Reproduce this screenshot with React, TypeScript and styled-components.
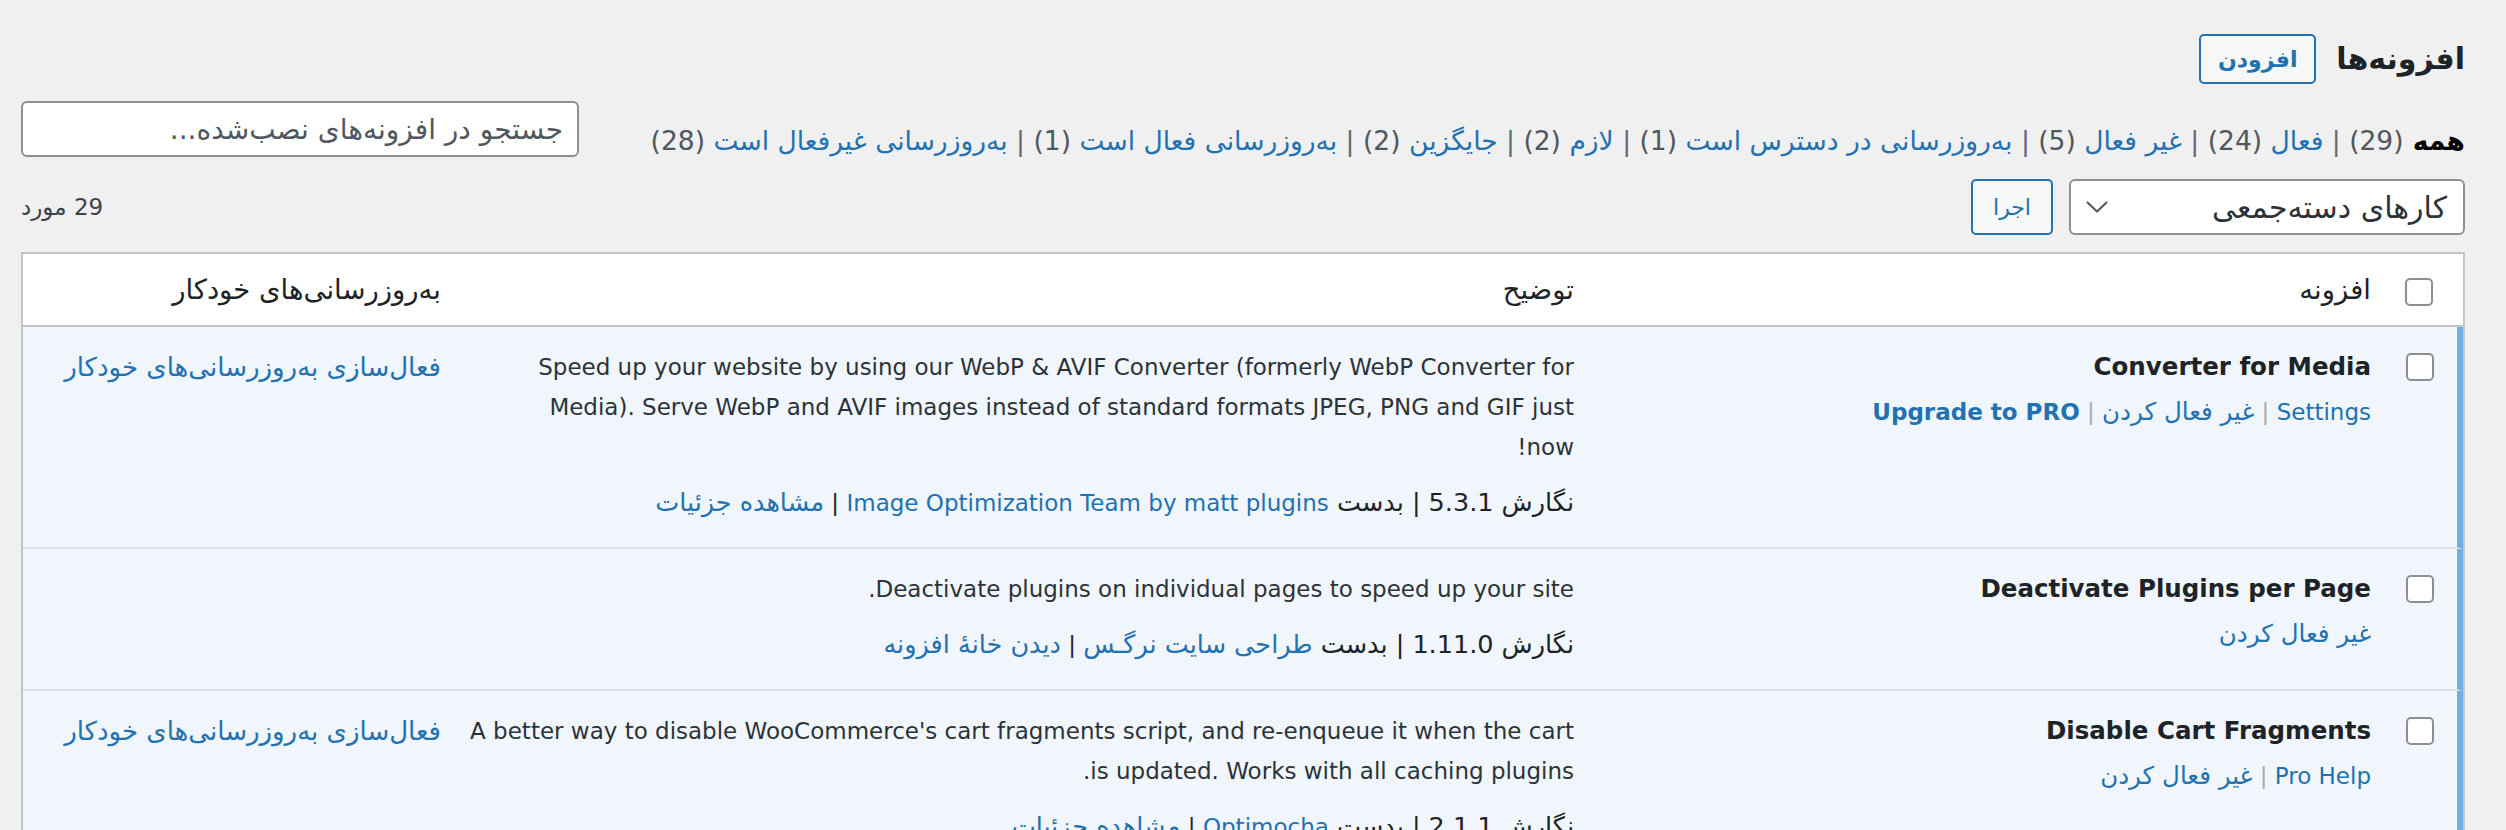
import React from 'react';
import styled, { createGlobalStyle } from 'styled-components';

const Z = '\u200c';
const FONT = `"DejaVu Sans", "Noto Sans", sans-serif`;

const Global = createGlobalStyle`
  html, body { margin: 0; padding: 0; background: #f0f0f1; }
  body { font-family: ${FONT}; color: #3c434a; font-size: 23px; }
  * { box-sizing: border-box; }
`;

const Page = styled.div`
  direction: rtl;
  padding: 34px 41px 0 21px;
`;

const Header = styled.div`
  display: flex;
  align-items: center;
  gap: 20px;
  height: 50px;
`;

const Title = styled.h1`
  margin: 0;
  font-size: 30px;
  font-weight: 700;
  color: #1d2327;
  line-height: 50px;
`;

const OutlineButton = styled.button<{ $bold?: boolean; $w: number; $h: number }>`
  width: ${p => p.$w}px;
  height: ${p => p.$h}px;
  padding: 0;
  border: 2px solid #2271b1;
  border-radius: 5px;
  background: #f6f7f7;
  color: #2271b1;
  font-family: ${FONT};
  font-size: 22px;
  font-weight: ${p => (p.$bold ? 700 : 400)};
  cursor: pointer;
`;

const FilterArea = styled.div`
  margin-top: 17px;
  height: 61px;
  display: flex;
  justify-content: space-between;
  align-items: flex-start;
`;

const Filters = styled.ul`
  list-style: none;
  margin: 19px 0 0;
  padding: 0;
  display: flex;
  line-height: 42px;
  font-size: 26.5px;
  color: #646970;
  white-space: pre;
`;

const FilterLink = styled.a<{ $current?: boolean }>`
  color: ${p => (p.$current ? '#000' : '#2271b1')};
  font-weight: ${p => (p.$current ? 700 : 400)};
  text-decoration: none;
`;

const Count = styled.span`
  color: #50575e;
  font-weight: 400;
`;

const SearchInput = styled.input`
  width: 558px;
  height: 56px;
  border: 2px solid #8c8f94;
  border-radius: 6px;
  background: #fff;
  padding: 0 14px;
  font-family: ${FONT};
  font-size: 28px;
  color: #2c3338;
  direction: rtl;
  &::placeholder { color: #50575e; }
`;

const TableNav = styled.div`
  display: flex;
  justify-content: space-between;
  align-items: center;
  margin-top: 17px;
  height: 56px;
`;

const BulkGroup = styled.div`
  display: flex;
  align-items: center;
  gap: 16px;
`;

const SelectBox = styled.div`
  width: 396px;
  height: 56px;
  border: 2px solid #8c8f94;
  border-radius: 6px;
  background: #fff;
  display: flex;
  align-items: center;
  justify-content: space-between;
  padding: 0 16px 0 14px;
  color: #2c3338;
  font-size: 30px;
`;

const ItemsCount = styled.span`
  color: #3c434a;
  font-size: 23px;
`;

const Table = styled.table`
  width: 100%;
  table-layout: fixed;
  border-collapse: separate;
  border-spacing: 0;
  border: 2px solid #c3c4c7;
  background: #fff;
  margin-top: 17px;
`;

const HeadCell = styled.th<{ $w?: number }>`
  ${p => (p.$w ? `width: ${p.$w}px;` : '')}
  text-align: right;
  font-weight: 400;
  font-size: 27.5px;
  color: #1d2327;
  padding: 15px 16px 16px;
  line-height: 40px;
  border-bottom: 2px solid #c3c4c7;
`;

const HeadCheckCell = styled.th`
  width: 76px;
  padding: 4px 30px 0 0;
  text-align: right;
  vertical-align: middle;
  border-bottom: 2px solid #c3c4c7;
`;

const Box = styled.span`
  display: inline-block;
  width: 28px;
  height: 28px;
  border: 2px solid #8c8f94;
  border-radius: 5px;
  background: #fff;
  vertical-align: top;
`;

const CheckCell = styled.th`
  vertical-align: top;
  text-align: right;
  padding: 26px 23px 0 0;
  background: #f0f6fc;
  border-right: 6px solid #72aee6;
  border-bottom: 2px solid #dadfe4;
`;

const Cell = styled.td`
  vertical-align: top;
  text-align: right;
  padding: 20px 16px 24px;
  line-height: 40px;
  font-size: 23px;
  background: #f0f6fc;
  border-bottom: 2px solid #dadfe4;
  color: #2c3338;
`;

const PluginName = styled.strong`
  display: block;
  font-size: 24.5px;
  font-weight: 700;
  color: #1d2327;
  line-height: 40px;
`;

const Actions = styled.div`
  margin-top: 5px;
  white-space: pre;
  color: #a7aaad;
  font-size: 23px;
`;

const Link = styled.a<{ $bold?: boolean }>`
  color: #2271b1;
  text-decoration: none;
  font-weight: ${p => (p.$bold ? 700 : 400)};
`;

const Fa = styled.span<{ $s?: number }>`
  font-size: ${p => p.$s ?? 25.5}px;
  line-height: 1;
`;

const AutoLink = styled.a`
  color: #2271b1;
  text-decoration: none;
  font-size: 26px;
`;

const Desc = styled.p`
  margin: 0;
  color: #2c3338;
`;

const DescLine = styled.span`
  display: block;
  white-space: nowrap;
`;

const Meta = styled.div`
  margin-top: 16px;
  color: #1d2327;
`;

const Chevron = () => (
  <svg width="24" height="12" viewBox="0 0 24 12" fill="none">
    <path d="M2.5 1.5 L12 10.5 L21.5 1.5" stroke="#50575e" strokeWidth="2" strokeLinecap="round" strokeLinejoin="round" />
  </svg>
);

type Filter = { label: string; count: number; current?: boolean };
const filters: Filter[] = [
  { label: 'همه', count: 29, current: true },
  { label: 'فعال', count: 24 },
  { label: 'غیر فعال', count: 5 },
  { label: `به${Z}روزرسانی در دسترس است`, count: 1 },
  { label: 'لازم', count: 2 },
  { label: 'جایگزین', count: 2 },
  { label: `به${Z}روزرسانی فعال است`, count: 1 },
  { label: `به${Z}روزرسانی غیرفعال است`, count: 28 },
];

type Action = { label: string; bold?: boolean; fa?: boolean };
type Plugin = {
  name: string;
  actions: Action[];
  desc: string[];
  version: string;
  author: string;
  authorFa?: boolean;
  detail: string;
  auto?: boolean;
};

const DEACT: Action = { label: 'غیر فعال کردن', fa: true };

const plugins: Plugin[] = [
  {
    name: 'Converter for Media',
    actions: [{ label: 'Settings' }, DEACT, { label: 'Upgrade to PRO', bold: true }],
    desc: [
      'Speed up your website by using our WebP & AVIF Converter (formerly WebP Converter for',
      'Media). Serve WebP and AVIF images instead of standard formats JPEG, PNG and GIF just',
      'now!',
    ],
    version: '5.3.1',
    author: 'Image Optimization Team by matt plugins',
    detail: 'مشاهده جزئیات',
    auto: true,
  },
  {
    name: 'Deactivate Plugins per Page',
    actions: [DEACT],
    desc: ['Deactivate plugins on individual pages to speed up your site.'],
    version: '1.11.0',
    author: 'طراحی سایت نرگـس',
    authorFa: true,
    detail: 'دیدن خانهٔ افزونه',
  },
  {
    name: 'Disable Cart Fragments',
    actions: [{ label: 'Pro Help' }, DEACT],
    desc: [
      "A better way to disable WooCommerce's cart fragments script, and re-enqueue it when the cart",
      'is updated. Works with all caching plugins.',
    ],
    version: '2.1.1',
    author: 'Optimocha',
    detail: 'مشاهده جزئیات',
    auto: true,
  },
];

export default function App() {
  return (
    <>
      <Global />
      <Page>
        <Header>
          <Title>{`افزونه${Z}ها`}</Title>
          <OutlineButton $bold $w={117} $h={50}>افزودن</OutlineButton>
        </Header>

        <FilterArea>
          <Filters>
            {filters.map((f, i) => (
              <li key={f.label}>
                <FilterLink $current={f.current}>
                  {f.label} <Count>({f.count})</Count>
                </FilterLink>
                {i < filters.length - 1 ? ' | ' : ''}
              </li>
            ))}
          </Filters>
          <SearchInput placeholder={`جستجو در افزونه${Z}های نصب${Z}شده...`} />
        </FilterArea>

        <TableNav>
          <BulkGroup>
            <SelectBox>
              <span>{`کارهای دسته${Z}جمعی`}</span>
              <Chevron />
            </SelectBox>
            <OutlineButton $w={82} $h={56}>اجرا</OutlineButton>
          </BulkGroup>
          <ItemsCount>29 مورد</ItemsCount>
        </TableNav>

        <Table>
          <thead>
            <tr>
              <HeadCheckCell><Box /></HeadCheckCell>
              <HeadCell $w={797}>افزونه</HeadCell>
              <HeadCell>توضیح</HeadCell>
              <HeadCell $w={434}>{`به${Z}روزرسانی${Z}های خودکار`}</HeadCell>
            </tr>
          </thead>
          <tbody>
            {plugins.map(p => (
              <tr key={p.name}>
                <CheckCell><Box /></CheckCell>
                <Cell>
                  <PluginName>{p.name}</PluginName>
                  <Actions>
                    {p.actions.map((a, i) => (
                      <React.Fragment key={a.label}>
                        {i > 0 ? ' | ' : ''}
                        <Link $bold={a.bold}>
                          {a.fa ? <Fa $s={24.5}>{a.label}</Fa> : a.label}
                        </Link>
                      </React.Fragment>
                    ))}
                  </Actions>
                </Cell>
                <Cell>
                  <Desc>
                    {p.desc.map(line => (
                      <DescLine key={line}>{line}</DescLine>
                    ))}
                  </Desc>
                  <Meta>
                    <Fa>{`نگارش ${p.version} | بدست `}</Fa>
                    <Link>{p.authorFa ? <Fa>{p.author}</Fa> : p.author}</Link>
                    {' | '}
                    <Link><Fa>{p.detail}</Fa></Link>
                  </Meta>
                </Cell>
                <Cell>
                  {p.auto ? <AutoLink>{`فعال${Z}سازی به${Z}روزرسانی${Z}های خودکار`}</AutoLink> : null}
                </Cell>
              </tr>
            ))}
          </tbody>
        </Table>
      </Page>
    </>
  );
}
